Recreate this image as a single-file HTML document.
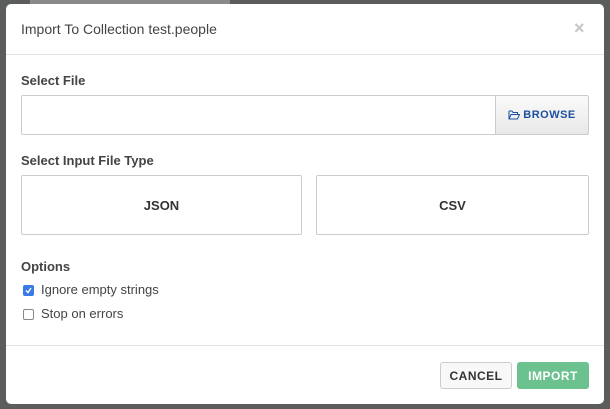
<!DOCTYPE html>
<html><head><style>
body{margin:0;width:610px;height:409px;background:#5b5c5c;position:relative;overflow:hidden;font-family:"Liberation Sans",sans-serif;}
.bg1{position:absolute;left:30px;top:0;width:200px;height:8px;background:#8a8a8a}
.m{position:absolute;left:6px;top:4px;width:598px;height:400px;background:#fff;border-radius:5px;}
.a{position:absolute}
.t{left:15px;top:17px;font-size:14px;color:#444}
.x{left:568px;top:14px;font-size:18px;color:#c6c6c6;font-weight:bold}
.hr{left:0;width:598px;height:1px;background:#e2e2e2}
.lb{font-size:13px;font-weight:bold;color:#444}
.box{border:1px solid #ccc;box-sizing:border-box;border-radius:2px}
.big{font-size:13px;font-weight:bold;color:#333;display:flex;align-items:center;justify-content:center}
.cb{width:11px;height:11px;box-sizing:border-box;border:1px solid #888;border-radius:2px}
.ct{font-size:13px;color:#444}
.btn{font-size:12px;font-weight:bold;display:flex;align-items:center;justify-content:center;border-radius:3px;box-sizing:border-box;letter-spacing:.5px}
</style></head><body>
<div class="bg1"></div>
<div class="m">
<div class="a t">Import To Collection test.people</div>
<div class="a x">×</div>
<div class="a hr" style="top:50px"></div>
<div class="a lb" style="left:15px;top:69px">Select File</div>
<div class="a box" style="left:15px;top:91px;width:475px;height:40px;border-radius:2px 0 0 2px"></div>
<div class="a box btn" style="left:489px;top:91px;width:94px;height:40px;background:linear-gradient(#fafafa,#e8e8e8);color:#1d4f9f;font-size:11px;border-radius:0 2px 2px 0">
<svg width="12" height="10" viewBox="0 0 12 10" style="margin-right:3px"><path d="M1 1h3l1 1.5h4.5v2M1 1v8h8.5l2-4.5H3L1 9" fill="none" stroke="#1d4f9f" stroke-width="1"/></svg>BROWSE</div>
<div class="a lb" style="left:15px;top:149px">Select Input File Type</div>
<div class="a box big" style="left:15px;top:171px;width:281px;height:60px">JSON</div>
<div class="a box big" style="left:310px;top:171px;width:273px;height:60px">CSV</div>
<div class="a lb" style="left:15px;top:255px">Options</div>
<div class="a cb" style="left:17px;top:281px;background:#3a7be3;border-color:#3a7be3"><svg width="9" height="9" viewBox="0 0 9 9" style="display:block"><path d="M2 4.5l2 2L7 2" fill="none" stroke="#fff" stroke-width="1.4"/></svg></div>
<div class="a ct" style="left:35px;top:278px">Ignore empty strings</div>
<div class="a cb" style="left:17px;top:305px"></div>
<div class="a ct" style="left:35px;top:302px">Stop on errors</div>
<div class="a hr" style="top:341px"></div>
<div class="a btn" style="left:434px;top:358px;width:72px;height:27px;border:1px solid #ccc;background:#f8f8f8;color:#333">CANCEL</div>
<div class="a btn" style="left:511px;top:358px;width:72px;height:27px;background:#6cc28f;color:#fff">IMPORT</div>
</div>
</body></html>
